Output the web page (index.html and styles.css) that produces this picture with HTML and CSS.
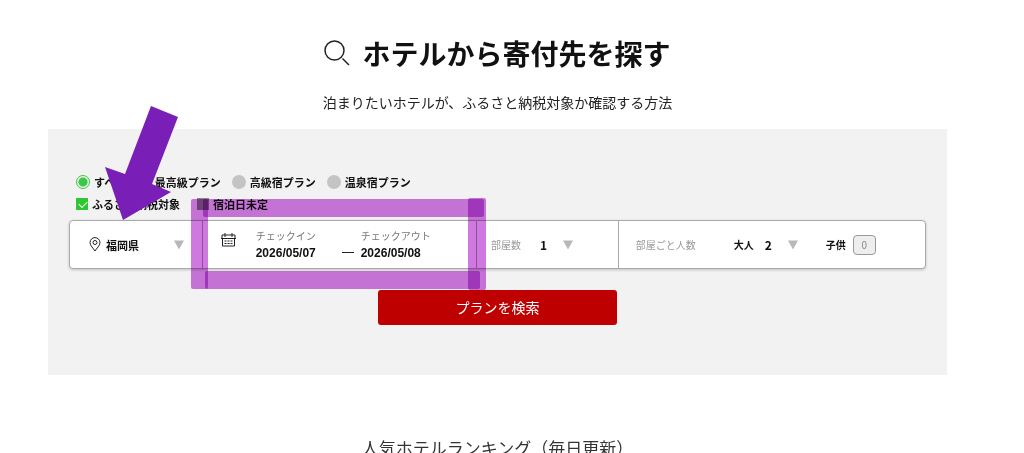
FILE: index.html
```
<!DOCTYPE html>
<html lang="ja">
<head>
  <meta charset="UTF-8" />
  <meta name="viewport" content="width=device-width, initial-scale=1.0"/>
  <title>ホテルから寄付先を探す</title>
  <link rel="stylesheet" href="styles.css">
</head>
<body>

  <main class="page">

    <!-- Heading -->
    <header class="intro">
      <h1>
        <svg class="search-icon" viewBox="0 0 26 26" aria-hidden="true">
          <circle cx="10.5" cy="10.5" r="9.5"/>
          <path d="M18.5 18.5 25 25"/>
        </svg>
        ホテルから寄付先を探す
      </h1>
      <p>泊まりたいホテルが、ふるさと納税対象か確認する方法</p>
    </header>

    <!-- Search Panel -->
    <form class="panel">
      <div class="options">
        <label><input type="radio" name="plan" checked>すべて</label>
        <label><input type="radio" name="plan">最高級プラン</label>
        <label><input type="radio" name="plan">高級宿プラン</label>
        <label><input type="radio" name="plan">温泉宿プラン</label>
      </div>
      <div class="options checks">
        <label><input type="checkbox" checked>ふるさと納税対象</label>
        <label><input type="checkbox">宿泊日未定</label>
      </div>

      <div class="search-wrap">
        <div class="search-bar">
          <div class="cell place">
            <svg class="pin-icon" viewBox="0 0 12 15" aria-hidden="true">
              <path d="M6 14C4.500 11.500 1 8.500 1 5.600A5 5 0 0 1 11 5.600C11 8.500 7.500 11.500 6 14Z"/>
              <circle cx="6" cy="5.500" r="2"/>
            </svg>
            <span class="select">
              <select aria-label="都道府県"><option>福岡県</option></select>
            </span>
          </div>

          <div class="cell dates">
            <svg class="calendar-icon" viewBox="0 0 15 14" aria-hidden="true">
              <path d="M1 5V2H14V5M1.500 5V13H13.500V5M0 5.500H15M4 0V4M11 0V4"/>
              <path class="days" d="M3.500 8H12M3.500 10.500H12"/>
            </svg>
            <div class="date">
              <label for="checkin">チェックイン</label>
              <input type="text" id="checkin" value="2026/05/07">
            </div>
            <span class="dash"></span>
            <div class="date">
              <label for="checkout">チェックアウト</label>
              <input type="text" id="checkout" value="2026/05/08">
            </div>
          </div>

          <div class="cell rooms">
            <label class="caption" for="rooms">部屋数</label>
            <span class="select number">
              <select id="rooms"><option>1</option></select>
            </span>
          </div>

          <div class="cell guests">
            <span class="caption">部屋ごと人数</span>
            <label for="adults">大人</label>
            <span class="select number">
              <select id="adults"><option>2</option></select>
            </span>
            <label for="children">子供</label>
            <input type="text" id="children" value="0">
          </div>
        </div>

        <!-- Marker strokes round the dates -->
        <div class="marker" aria-hidden="true">
          <span class="stroke top"></span>
          <span class="stroke right"></span>
          <span class="stroke bottom"></span>
          <span class="stroke left"></span>
        </div>
      </div>

      <button type="submit">プランを検索</button>

      <svg class="arrow" viewBox="0 0 66 114" aria-hidden="true">
        <polygon points="46,0 73,11 47,78 66,86 18,114 0,61 20,68"/>
      </svg>
    </form>

    <h2>人気ホテルランキング（毎日更新）</h2>

  </main>

</body>
</html>
```
FILE: styles.css
```
* {
  box-sizing: border-box;
}

body {
  font-family: "Noto Sans CJK JP", sans-serif;
  background: #fff;
  color: #111;
  margin: 0;
}

.page {
  margin: 0 77px 0 48px;
  padding-top: 33px;
}

.intro {
  text-align: center;
}

h1 {
  display: flex;
  align-items: center;
  justify-content: center;
  gap: 12px;
  margin: 0;
  font-size: 28px;
  line-height: 40px;
  white-space: nowrap;
}

.search-icon {
  width: 26px;
  height: 26px;
  fill: none;
  stroke: #222;
  stroke-width: 1.5;
}

.intro p {
  margin: 19px 0 17px;
  font-size: 14px;
  line-height: 20px;
  color: #222;
}

.panel {
  position: relative;
  background: #f2f2f2;
  padding: 43px 21px 50px;
}

/* Plan options */
.options {
  display: flex;
  gap: 11px;
  padding-left: 7px;
  font-size: 11px;
  font-weight: bold;
  line-height: 20px;
}

.options label {
  display: flex;
  align-items: center;
  gap: 4px;
  white-space: nowrap;
}

.options.checks {
  gap: 17px;
  margin: 2px 0 6px;
}

.options input {
  appearance: none;
  width: 14px;
  height: 14px;
  margin: 0;
  background: #c4c4c4;
}

.options input[type="radio"] {
  border-radius: 50%;
}

.options input[type="radio"]:checked {
  background: radial-gradient(circle, #3cc648 4px, #e4f5e5 5px);
  border: 1px solid #3cc648;
}

.options input[type="checkbox"] {
  position: relative;
  width: 12px;
  height: 12px;
  background: #888;
}

.options input[type="checkbox"]:checked {
  background: #2fc635;
}

.options input[type="checkbox"]:checked::after {
  content: "";
  position: absolute;
  left: 3px;
  top: 3px;
  width: 7px;
  height: 4px;
  border-left: 1px solid #fff;
  border-bottom: 1px solid #fff;
  transform: rotate(-45deg);
}

/* Search bar */
.search-wrap {
  position: relative;
}

.search-bar {
  display: grid;
  grid-template-columns: 132fr 275fr 142fr 308fr;
  background: #fff;
  border: 1px solid #aaa;
  border-radius: 4px;
  box-shadow: 0 1px 3px rgba(0, 0, 0, 0.2);
}

.cell {
  display: flex;
  align-items: center;
  height: 47px;
  font-size: 11px;
  font-weight: bold;
  white-space: nowrap;
}

.cell + .cell {
  border-left: 1px solid #aaa;
}

.cell svg {
  flex: none;
  fill: none;
  stroke: #222;
}

.cell input,
.cell select {
  appearance: none;
  margin: 0;
  padding: 0;
  border: 0;
  background: none;
  color: #111;
  font: inherit;
}

.caption {
  font-size: 10px;
  font-weight: normal;
  color: #999;
}

.select {
  position: relative;
  display: flex;
}

.select select {
  width: 100%;
}

.select::after {
  content: "";
  position: absolute;
  right: 0;
  top: 50%;
  border: 5px solid transparent;
  border-top: 9px solid #b8b8b8;
  border-bottom: 0;
  transform: translateY(-50%);
  pointer-events: none;
}

.select.number {
  width: 33px;
  font-size: 12px;
}

.place {
  gap: 5px;
  padding: 0 18px 0 19px;
}

.place .select {
  flex: 1;
}

.pin-icon {
  width: 12px;
  height: 15px;
}

.dates {
  padding-left: 18px;
}

.calendar-icon {
  width: 15px;
  height: 14px;
  margin: 0 20px 9px 0;
}

.calendar-icon .days {
  stroke-dasharray: 2 1;
}

.date {
  width: 80px;
}

.date label {
  display: block;
  font-size: 10px;
  font-weight: normal;
  line-height: 16px;
  color: #777;
}

.date input {
  display: block;
  width: 100%;
  height: 18px;
  font-family: "Liberation Sans", sans-serif;
  font-size: 12px;
}

.dash {
  width: 12px;
  height: 1px;
  margin: 15px 7px 0 6px;
  background: #222;
}

.rooms {
  gap: 19px;
  padding-left: 14px;
}

.guests {
  padding-left: 17px;
}

.guests label {
  margin-right: 11px;
  font-size: 10px;
}

.guests .caption {
  margin-right: 38px;
}

.guests .select {
  margin-right: 28px;
}

.guests label[for="children"] {
  margin-right: 7px;
}

.guests input {
  width: 23px;
  height: 20px;
  border: 1px solid #999;
  border-radius: 4px;
  background: #eee;
  color: #888;
  font-size: 10px;
  font-weight: normal;
  text-align: center;
}

.panel button {
  display: block;
  width: 239px;
  height: 35px;
  margin: 21px auto 0;
  padding: 0 0 2px;
  border: 0;
  border-radius: 3px;
  background: #be0000;
  color: #fff;
  font-family: inherit;
  font-size: 14px;
  cursor: pointer;
}

/* Marker and arrow drawn over the form */
.marker {
  position: absolute;
  left: 122px;
  top: -22px;
  width: calc(35% - 5px);
  height: 92px;
  mix-blend-mode: multiply;
  pointer-events: none;
}

.stroke {
  position: absolute;
  border-radius: 2px;
  background: #cf79e0;
  mix-blend-mode: multiply;
}

.stroke.top {
  left: 12px;
  right: 2px;
  top: 1px;
  height: 18px;
}

.stroke.right {
  right: 0;
  top: 0;
  bottom: 0;
  width: 18px;
}

.stroke.bottom {
  left: 14px;
  right: 6px;
  bottom: 1px;
  height: 18px;
}

.stroke.left {
  left: 0;
  top: 1px;
  bottom: 1px;
  width: 17px;
}

.arrow {
  position: absolute;
  left: 57px;
  top: -23px;
  width: 66px;
  height: 114px;
  overflow: visible;
  fill: #7a1eb8;
  pointer-events: none;
}

h2 {
  margin: 61px 0 0;
  font-size: 17px;
  font-weight: normal;
  line-height: 24px;
  text-align: center;
  color: #333;
}
```
